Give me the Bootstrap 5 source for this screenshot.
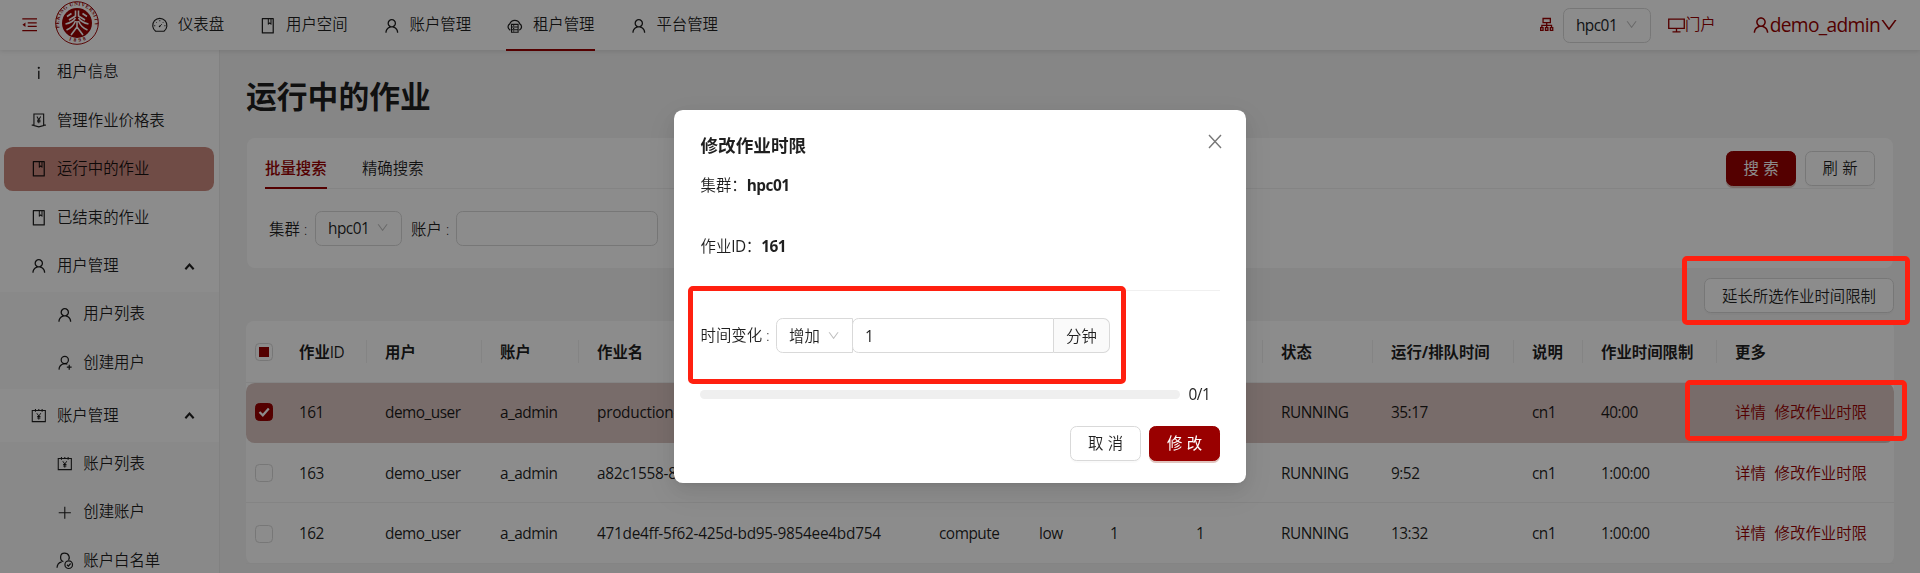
<!DOCTYPE html>
<html lang="zh-CN">
<head>
<meta charset="utf-8">
<meta name="viewport" content="width=device-width, initial-scale=1">
<title>运行中的作业</title>
<link rel="stylesheet" href="https://cdn.jsdelivr.net/npm/bootstrap@5.3.0/dist/css/bootstrap.min.css">
<style>
:root{--brand:#900;--line:#d9d9d9;--soft:#f0f0f0}
html,body{height:573px;overflow:hidden}
body{font-family:"Open Sans","Noto Sans CJK SC",sans-serif;font-weight:350;font-size:15.4px;line-height:24.2px;color:rgba(0,0,0,.88);background:#f4f4f4}
.la{letter-spacing:-.5px;font-weight:400}
b.la{font-weight:700}
.ico{width:15.4px;height:15.4px;fill:currentColor;flex:none;display:block}
.topmenu .ico,.side .ico{width:17.6px;height:17.6px}
.s{fill:none;stroke:currentColor}
symbol{stroke-width:72px}
.brandc{color:var(--brand)}
/* top bar */
.topbar{height:50px;background:#fff;box-shadow:0 1px 5px rgba(0,0,0,.12);position:relative;z-index:2;padding-left:22px}
.seal{width:44px;height:44px;margin:-4px 35px 0 18px}
.topmenu{gap:35.1px;height:51px;margin-left:16.8px}
.topmenu a{color:inherit;text-decoration:none;gap:9.2px;border-bottom:2px solid transparent;height:51px;padding:3px 0 0}
.topmenu a.on{border-color:var(--brand)}
.pick{border:1px solid var(--line);border-radius:6.6px;height:35px;background:#fff;padding:2px 12px 0 12px}
.pick .ico{width:13.2px;height:13.2px;color:#bfbfbf;margin-bottom:3px}
.who{font-size:19.2px;letter-spacing:-.67px;font-weight:400}
/* side menu */
.side{width:220px;background:#fff;border-right:1px solid #ececec;height:523px;overflow:hidden;flex:none}
.side .it{height:44px;margin-bottom:4.4px;padding-left:29.7px;padding-top:1px;gap:9.7px}
.side .it.on{background:#cd8b80;margin-left:4px;width:210px;padding-left:25.7px;border-radius:8.8px}
.sub{background:#fafafa}
.side .sub .it{padding-left:56px}
.side .sub .it:last-child{margin-bottom:0;height:48.4px;padding-bottom:4.4px}
.sub+.it{margin-top:4.4px}
.side .ico.caret{margin-left:auto;margin-right:24px;width:11px;height:11px}
/* content */
.main{padding:0 26px 0 26px}
.ttl{font-size:30.8px;font-weight:700;line-height:42px;margin:25px 0 0 0}
.panel{background:#fff;border-radius:8px;height:130px;margin:21px 1px 0;padding:0 18px}
.tabs{height:51px;border-bottom:1px solid var(--soft)}
.tabs .tb{height:51px;line-height:62px;margin-right:35.4px}
.tabs .tb.on{color:var(--brand);border-bottom:2px solid var(--brand);font-weight:500}
.bt{height:35px;border-radius:6.6px;border:1px solid var(--line);background:#fff;padding:0 16.5px;color:inherit;font-weight:inherit;font-size:15.4px;line-height:34px;box-shadow:0 2px 0 rgba(0,0,0,.02)}
.bt.two{letter-spacing:4.4px;padding:0 12px 0 16.5px;width:70px;white-space:nowrap}
.bt.pri{background:var(--brand);border-color:var(--brand);color:#fff;font-weight:400;box-shadow:0 2px 0 rgba(153,60,40,.3)}
.fld{height:35px;border:1px solid var(--line);border-radius:6.6px;width:202px;background:#fff}
.ext{margin:10px 0 0;width:190px;padding-top:1px}
table.jobs{width:1648px;table-layout:fixed;margin-top:8px;background:#fff;border-radius:8px;border-collapse:separate;border-spacing:0}
.jobs th,.jobs td{padding:3px 0 0 18px;white-space:nowrap;overflow:hidden;height:60px;border-bottom:1px solid var(--soft)}
.jobs th{height:62px;padding-top:3px;font-weight:700;background:linear-gradient(var(--soft),var(--soft)) right center/1px 23px no-repeat}
.jobs th.nb{background:none}
.jobs tr:last-child td{height:61px}
.jobs th:first-child,.jobs td:first-child{padding-left:9px;padding-top:1px}
.jobs tr.sel td{background:#dac5c1;border-bottom:0;padding-top:1px}
.jobs tr.sel td:first-child{border-radius:8.8px 0 0 8.8px;padding-top:0;padding-bottom:2px}
.jobs tr.sel td:last-child{border-radius:0 8.8px 8.8px 0}
.jobs td:nth-child(5){letter-spacing:-.28px}
.jobs td:last-child{letter-spacing:0;font-weight:350}
.jobs a{color:var(--brand);text-decoration:none;margin-right:8.8px}
.ck{display:block;width:18px;height:18px;border:1px solid var(--line);border-radius:4.4px;background:#fff;position:relative}
.ck.half{padding:3px}.ck.half::after{content:"";display:block;width:10px;height:10px;background:var(--brand)}
.ck.full{background:var(--brand);border-color:var(--brand)}
.ck svg{display:block;width:16px;height:16px;fill:none;stroke:#fff;stroke-width:2.2}
/* dialog */
.shade{position:fixed;inset:0;background:rgba(0,0,0,.45);z-index:5}
.dlg{width:572px;height:373px;margin:110px 0 0 674px;background:#fff;border-radius:8.8px;padding:22px 26px 0 26.5px;box-shadow:0 6px 18px rgba(0,0,0,.08),0 3px 7px -4px rgba(0,0,0,.12),0 10px 31px 9px rgba(0,0,0,.05)}
.dlg h5{font-size:17.6px;font-weight:700;line-height:26px;margin:0}
.dlg .r1{margin-top:16px}.dlg .r2{margin-top:37px}
.dlg hr{margin:31px 0 27px;border:0;border-top:1px solid var(--soft);opacity:1}
.addon{background:#fafafa;border:1px solid var(--line);border-left:0;border-radius:0 6.6px 6.6px 0;height:35px;width:56px;text-align:center;line-height:35px}
.num{border-radius:6.6px 0 0 6.6px;width:202px;padding:6px 12px;margin-left:-1px}
.bar{width:480px;height:9px;border-radius:5px;background:#efefef;margin-left:-1px}
/* highlight frames over the page */
.mark-box{position:fixed;border:5px solid #ff2010;border-radius:5px;z-index:9}
</style>
</head>
<body>
<svg width="0" height="0" class="position-absolute">
<symbol id="user" viewBox="0 0 1024 1024"><path d="M858.500 763.600a374 374 0 0 0-80.600-119.500 375.630 375.630 0 0 0-119.500-80.600c-.4-.2-.8-.3-1.200-.5C719.500 518 760 444.700 760 362c0-137-111-248-248-248S264 225 264 362c0 82.700 40.500 156 102.800 201.100-.4.2-.8.3-1.200.5-44.800 18.900-85 46-119.500 80.600a375.630 375.630 0 0 0-80.600 119.500A371.700 371.700 0 0 0 136 901.800a8 8 0 0 0 8 8.200h60c4.400 0 7.900-3.500 8-7.800 2-77.200 33-149.500 87.800-204.300 56.700-56.700 132-87.900 212.200-87.900s155.500 31.200 212.200 87.900C779 752.700 810 825 812 902.200c.1 4.400 3.600 7.800 8 7.800h60a8 8 0 0 0 8-8.200c-1-47.800-10.900-94.300-29.500-138.200zM512 534c-45.900 0-89.100-17.900-121.600-50.400S340 407.900 340 362c0-45.900 17.900-89.100 50.400-121.600S466.100 190 512 190s89.100 17.900 121.600 50.400S684 316.100 684 362c0 45.900-17.900 89.100-50.400 121.600S557.900 534 512 534z"/></symbol>
<symbol id="down" viewBox="0 0 1024 1024"><path d="M884 256h-75c-5.100 0-9.900 2.500-12.900 6.600L512 654.200 227.900 262.600c-3-4.100-7.800-6.600-12.900-6.600h-75c-6.500 0-10.300 7.400-6.500 12.700l352.600 486.100c12.800 17.600 39 17.600 51.700 0l352.600-486.100c3.900-5.300.1-12.700-6.400-12.700z"/></symbol>
<symbol id="book" viewBox="0 0 1024 1024"><path d="M832 64H192c-17.700 0-32 14.300-32 32v832c0 17.700 14.300 32 32 32h640c17.700 0 32-14.300 32-32V96c0-17.700-14.300-32-32-32zm-260 72h96v209.900L621.500 312 572 347.400V136zm220 752H232V136h280v296.900c0 3.300 1 6.600 3 9.300a15.900 15.900 0 0 0 22.300 3.700l83.800-59.900 81.400 59.400c2.700 2 6 3.100 9.400 3.100 8.800 0 16-7.200 16-16V136h64v752z"/></symbol>
<symbol id="dash" viewBox="-40 -10 1104 1104"><path class="s" d="M250 882A445 445 0 1 1 774 882Z"/><path class="s" stroke-width="56" d="M512 180v80M270 300l46 46M754 300l-50 50M150 540h80M794 540h80M490 590l150-150"/><circle cx="500" cy="580" r="52"/></symbol>
<symbol id="cloud" viewBox="0 0 1024 1024"><path class="s" d="M250 760A200 200 0 0 1 220 400 310 310 0 0 1 804 400 200 200 0 0 1 774 760"/><path class="s" stroke-width="64" d="M320 430h384v460H320zM320 585h384M320 740h384"/><path d="M410 480h70v60h-70zM410 635h70v60h-70zM410 790h70v60h-70z"/></symbol>
<symbol id="info" viewBox="0 0 1024 1024"><path d="M448 224a64 64 0 1 0 128 0 64 64 0 1 0-128 0zm96 168h-64c-4.400 0-8 3.600-8 8v464c0 4.400 3.600 8 8 8h64c4.400 0 8-3.600 8-8V400c0-4.400-3.600-8-8-8z"/></symbol>
<symbol id="tag" viewBox="-50 -20 1124 1124"><path class="s" d="M202 840V110h620v730L512 930zM60 820h150M814 820h150"/><path class="s" stroke-width="64" d="M390 270l122 200 122-200M512 470v230M400 500h224M400 600h224"/></symbol>
<symbol id="cal" viewBox="-74 -64 1172 1172"><path class="s" d="M76 170h872v740H76zM290 70v190M512 70v90M734 70v190"/><path class="s" stroke-width="64" d="M380 350l132 190 132-190M512 540v240M400 570h224M400 670h224"/></symbol>
<symbol id="plus" viewBox="-70 -70 1164 1164"><path class="s" d="M512 110v804M110 512h804"/></symbol>
<symbol id="useradd" viewBox="0 0 1024 1024"><path class="s" d="M174 910c6-190 130-320 338-345 60-2 110 12 150 30"/><circle class="s" cx="512" cy="350" r="210"/><path class="s" d="M770 630v280M630 770h280"/></symbol>
<symbol id="usercheck" viewBox="0 0 1024 1024"><path class="s" d="M60 920c6-190 100-310 270-350M430 560C210 500 200 70 490 70s330 300 230 380"/><circle class="s" cx="740" cy="740" r="220"/><path class="s" d="M640 740l80 80 130-150"/></symbol>
<symbol id="up" viewBox="0 0 12 12"><path d="M1.500 9L6 4l4.500 5" fill="none" stroke="currentColor" stroke-width="2.300"/></symbol>
<symbol id="fold" viewBox="0 0 1024 1024"><path class="s" stroke-width="80" d="M20 120h984M380 390h600M380 630h600M20 900h984"/><path d="M30 512l200-150v300z"/></symbol>
<symbol id="cluster" viewBox="0 0 1024 1024"><path class="s" stroke-width="85" d="M270 100h484v270H270zM512 370v340M190 710V550h644v160M110 710h160v180H110zM432 710h160v180H432zM754 710h160v180H754z"/></symbol>
<symbol id="desk" viewBox="0 0 1024 1024"><path class="s" stroke-width="80" d="M44 130h936v560H44zM512 690v190M270 900h484"/></symbol>
</svg>

<header class="topbar d-flex align-items-center">
  <svg class="ico brandc"><use href="#fold"/></svg>
  <svg class="seal" viewBox="0 0 44 44">
    <circle cx="22" cy="22" r="21.300" fill="#fff" stroke="#a00808" stroke-width="1"/>
    <circle cx="22" cy="22" r="15" fill="#900"/>
    <defs><path id="arcT" d="M4.600 27A18 18 0 1 1 39.400 27"/><path id="arcB" d="M11 37.500A19.500 19.500 0 0 0 33 37.500"/></defs>
    <g font-family="Liberation Serif" font-size="5.200" fill="#900" font-weight="700"><text textLength="63"><textPath href="#arcT" textLength="63">PEKING UNIVERSITY</textPath></text><text><textPath href="#arcB" startOffset="3" textLength="18">1898</textPath></text></g>
    <path d="M20.500 9.500v5.500l-6.500 4M23.500 9.500v5.500l6.500 4M10.500 23c5-1 8-3 10-6M33.500 23c-5-1-8-3-10-6M11.500 29c5-2 7.500-5 9-9M32.500 29c-5-2-7.500-5-9-9M22 20v7M22 26l-6 8M22 26l6 8M12 15.500l4.500-3M32 15.500l-4.500-3" fill="none" stroke="#fff" stroke-width="1.600"/>
  </svg>
  <nav class="topmenu d-flex">
    <a class="d-flex align-items-center" href="#"><svg class="ico"><use href="#dash"/></svg>仪表盘</a>
    <a class="d-flex align-items-center" href="#"><svg class="ico"><use href="#book"/></svg>用户空间</a>
    <a class="d-flex align-items-center" href="#"><svg class="ico"><use href="#user"/></svg>账户管理</a>
    <a class="d-flex align-items-center on" href="#"><svg class="ico"><use href="#cloud"/></svg>租户管理</a>
    <a class="d-flex align-items-center" href="#"><svg class="ico"><use href="#user"/></svg>平台管理</a>
  </nav>
  <div class="ms-auto d-flex align-items-center brandc" style="padding-right:21px">
    <svg class="ico"><use href="#cluster"/></svg>
    <div class="pick d-flex align-items-center justify-content-between text-dark" style="width:88px;margin-left:9px"><span class="la">hpc01</span><svg class="ico"><use href="#down"/></svg></div>
    <svg class="ico" style="width:17px;height:17px;margin-left:17px"><use href="#desk"/></svg><span>门户</span>
    <span class="who d-flex align-items-center" style="margin-left:35px"><svg class="ico" style="width:20px;height:20px;margin-right:-1px"><use href="#user"/></svg>demo_admin<svg class="ico" style="width:20px;height:20px;margin-left:-1px"><use href="#down"/></svg></span>
  </div>
</header>

<div class="d-flex">
  <aside class="side">
    <div class="it d-flex align-items-center"><svg class="ico"><use href="#info"/></svg>租户信息</div>
    <div class="it d-flex align-items-center"><svg class="ico"><use href="#tag"/></svg>管理作业价格表</div>
    <div class="it d-flex align-items-center on"><svg class="ico"><use href="#book"/></svg>运行中的作业</div>
    <div class="it d-flex align-items-center"><svg class="ico"><use href="#book"/></svg>已结束的作业</div>
    <div class="it d-flex align-items-center"><svg class="ico"><use href="#user"/></svg>用户管理<svg class="ico caret"><use href="#up"/></svg></div>
    <div class="sub">
      <div class="it d-flex align-items-center"><svg class="ico"><use href="#user"/></svg>用户列表</div>
      <div class="it d-flex align-items-center"><svg class="ico"><use href="#useradd"/></svg>创建用户</div>
    </div>
    <div class="it d-flex align-items-center"><svg class="ico"><use href="#cal"/></svg>账户管理<svg class="ico caret"><use href="#up"/></svg></div>
    <div class="sub">
      <div class="it d-flex align-items-center"><svg class="ico"><use href="#cal"/></svg>账户列表</div>
      <div class="it d-flex align-items-center"><svg class="ico"><use href="#plus"/></svg>创建账户</div>
      <div class="it d-flex align-items-center"><svg class="ico"><use href="#usercheck"/></svg>账户白名单</div>
    </div>
  </aside>

  <main class="main flex-grow-1">
    <h1 class="ttl">运行中的作业</h1>
    <section class="panel">
      <div class="tabs d-flex">
        <div class="tb on">批量搜索</div><div class="tb">精确搜索</div>
        <div class="ms-auto d-flex" style="gap:9px;padding-top:13px"><button class="bt two pri">搜索</button><button class="bt two">刷新</button></div>
      </div>
      <div class="d-flex align-items-center" style="padding:22px 0 0 4px">
        <span class="pt-1" style="width:46px">集群 :</span>
        <div class="pick d-flex align-items-center justify-content-between" style="width:87px"><span class="la">hpc01</span><svg class="ico"><use href="#down"/></svg></div>
        <span class="pt-1" style="width:45px;margin-left:9px">账户 :</span>
        <div class="fld"></div>
      </div>
    </section>
    <div class="d-flex justify-content-end"><button class="bt ext text-nowrap">延长所选作业时间限制</button></div>
    <table class="jobs">
      <colgroup><col style="width:35px"><col style="width:86px"><col style="width:115px"><col style="width:97px"><col style="width:342px"><col style="width:100px"><col style="width:71px"><col style="width:86px"><col style="width:85px"><col style="width:110px"><col style="width:141px"><col style="width:69px"><col style="width:134px"><col style="width:177px"></colgroup>
      <thead><tr><th class="nb"><span class="ck half"></span></th><th>作业<span class="la">ID</span></th><th>用户</th><th>账户</th><th>作业名</th><th>分区</th><th>QOS</th><th>节点数</th><th>核心数</th><th>状态</th><th>运行/排队时间</th><th>说明</th><th>作业时间限制</th><th class="nb">更多</th></tr></thead>
      <tbody>
        <tr class="la sel"><td><span class="ck full"><svg viewBox="0 0 16 16"><path d="M3.500 8l3.300 3.300L12.800 4.500"/></svg></span></td><td>161</td><td>demo_user</td><td>a_admin</td><td>production-</td><td>compute</td><td>low</td><td>1</td><td>1</td><td>RUNNING</td><td>35:17</td><td>cn1</td><td>40:00</td><td><a href="#">详情</a><a href="#">修改作业时限</a></td></tr>
        <tr class="la"><td><span class="ck"></span></td><td>163</td><td>demo_user</td><td>a_admin</td><td>a82c1558-8</td><td>compute</td><td>low</td><td>1</td><td>1</td><td>RUNNING</td><td>9:52</td><td>cn1</td><td>1:00:00</td><td><a href="#">详情</a><a href="#">修改作业时限</a></td></tr>
        <tr class="la"><td><span class="ck"></span></td><td>162</td><td>demo_user</td><td>a_admin</td><td>471de4ff-5f62-425d-bd95-9854ee4bd754</td><td>compute</td><td>low</td><td>1</td><td>1</td><td>RUNNING</td><td>13:32</td><td>cn1</td><td>1:00:00</td><td><a href="#">详情</a><a href="#">修改作业时限</a></td></tr>
      </tbody>
    </table>
  </main>
</div>

<div class="shade">
  <div class="dlg">
    <div class="d-flex justify-content-between"><h5>修改作业时限</h5>
      <svg width="14" height="15" viewBox="0 0 14 15" style="margin:2px -2px 0 0"><path d="M1 1l12 13M13 1L1 14" stroke="#777" stroke-width="1.400" fill="none"/></svg></div>
    <div class="r1">集群：<b class="la">hpc01</b></div>
    <div class="r2">作业<span class="la">ID</span>：<b class="la">161</b></div>
    <hr>
    <div class="d-flex align-items-center">
      <span class="text-nowrap" style="width:75.500px;padding-top:1px">时间变化 :</span>
      <div class="pick d-flex align-items-center justify-content-between" style="width:77px;border-radius:6.6px 0 0 6.6px">增加<svg class="ico"><use href="#down"/></svg></div>
      <div class="fld num la">1</div><div class="addon">分钟</div>
    </div>
    <div class="d-flex align-items-center" style="margin-top:29px;height:24px"><div class="bar"></div><span class="la" style="margin-left:9px;padding-top:1px">0/1</span></div>
    <div class="d-flex justify-content-end" style="gap:8px;margin-top:20px"><button class="bt two" style="width:71px">取消</button><button class="bt two pri" style="width:71px">修改</button></div>
  </div>
</div>
<div class="mark-box" style="left:688px;top:286px;width:438px;height:98px"></div>
<div class="mark-box" style="left:1682px;top:256px;width:228px;height:69px"></div>
<div class="mark-box" style="left:1685px;top:380px;width:222px;height:61px"></div>
<script src="https://cdn.jsdelivr.net/npm/bootstrap@5.3.0/dist/js/bootstrap.bundle.min.js"></script>
</body>
</html>
